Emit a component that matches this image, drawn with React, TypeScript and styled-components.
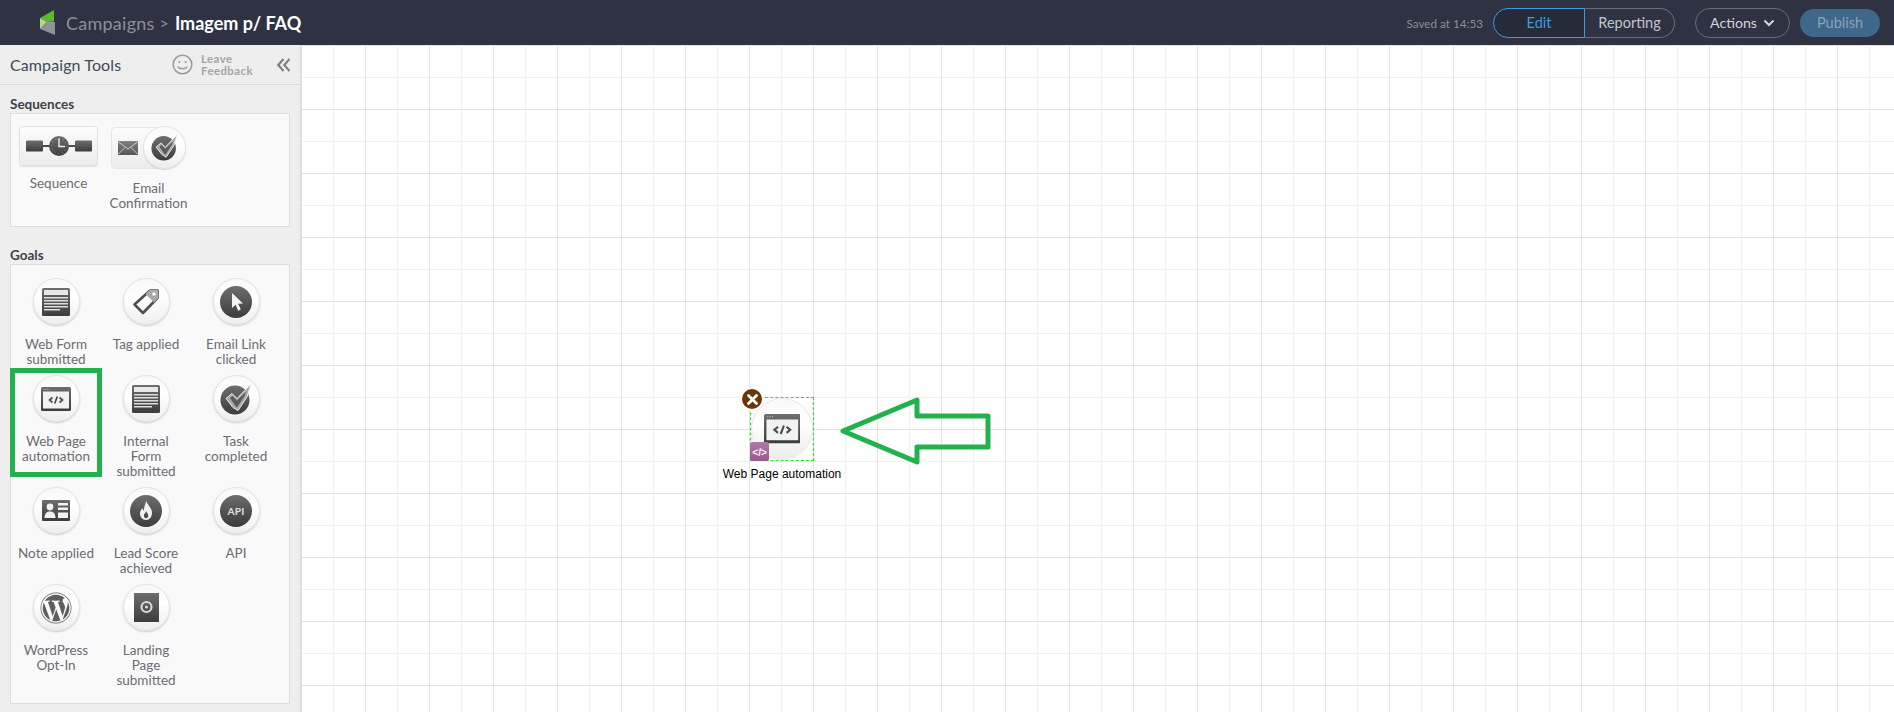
import React from "react";
import styled, { createGlobalStyle } from "styled-components";
import { FaWordpress } from "react-icons/fa";

const UI_FONT = `Lato, "Open Sans", "Liberation Sans", sans-serif`;
const GREEN = "#22b14c";

const GlobalStyle = createGlobalStyle`
  html, body {
    margin: 0;
    padding: 0;
    overflow: hidden;
    background: #fff;
    font-family: ${UI_FONT};
  }
  * { box-sizing: border-box; }
`;

const Page = styled.div`
  display: flex;
  flex-direction: column;
  width: 1894px;
  height: 712px;
  overflow: hidden;
`;

const TopBar = styled.header`
  display: flex;
  align-items: center;
  flex: 0 0 45px;
  padding: 0 14px 0 40px;
  background: #2e3243;
`;

const Crumb = styled.span`
  margin-left: 11px;
  font-size: 18px;
  letter-spacing: 0.25px;
  color: #8d8f96;
`;

const CrumbSep = styled.span`
  margin: 0 6px 0 5px;
  font-size: 16px;
  color: #8d8f96;
`;

const Title = styled.span`
  font-size: 18px;
  font-weight: 700;
  color: #fff;
`;

const Saved = styled.span`
  margin-left: auto;
  margin-right: 10px;
  font-size: 11.7px;
  color: #8d8f96;
`;

const Segments = styled.div`
  display: flex;
  height: 30px;
  margin-right: 20px;
`;

const Segment = styled.div<{ $active?: boolean }>`
  display: flex;
  align-items: center;
  justify-content: center;
  height: 30px;
  font-size: 14.5px;
  color: ${(p) => (p.$active ? "#3f9bdc" : "#c4c5c9")};
  border: 1px solid ${(p) => (p.$active ? "#3f9bdc" : "#6b6d78")};
  width: ${(p) => (p.$active ? "92px" : "90px")};
  border-radius: ${(p) => (p.$active ? "15px 0 0 15px" : "0 15px 15px 0")};
  border-left-width: ${(p) => (p.$active ? "1px" : "0")};
  background: ${(p) => (p.$active ? "#262a39" : "transparent")};
`;

const ActionsButton = styled.div`
  display: flex;
  align-items: center;
  justify-content: center;
  gap: 6px;
  width: 95px;
  height: 30px;
  margin-right: 10px;
  font-size: 14.2px;
  color: #d4d5d8;
  border: 1px solid #6b6d78;
  border-radius: 15px;
`;

const PublishButton = styled.div`
  display: flex;
  align-items: center;
  justify-content: center;
  width: 80px;
  height: 28px;
  font-size: 14.5px;
  color: #8ba2b6;
  background: #3f678a;
  border-radius: 14px;
`;

const Body = styled.div`
  display: flex;
  flex: 1;
  min-height: 0;
`;

const Sidebar = styled.aside`
  flex: 0 0 302px;
  background: #eeeeee;
  border-right: 2px solid #dedede;
`;

const SidebarHead = styled.div`
  display: flex;
  align-items: center;
  height: 40px;
  padding: 0 10px;
  border-bottom: 1px solid #dcdcdc;
`;

const SidebarTitle = styled.span`
  font-size: 16px;
  letter-spacing: 0.1px;
  color: #3f4a58;
`;

const Feedback = styled.div`
  display: flex;
  align-items: center;
  gap: 8px;
  margin-left: auto;
  margin-right: 24px;
`;

const FeedbackText = styled.span`
  font-size: 11.4px;
  line-height: 12px;
  font-weight: 700;
  letter-spacing: 0.45px;
  color: #a4a4a4;
`;

const SectionLabel = styled.div<{ $gap: number }>`
  height: 18px;
  margin: ${(p) => p.$gap}px 10px 0;
  font-size: 13.5px;
  line-height: 18px;
  font-weight: 700;
  color: #3e424a;
`;

const Panel = styled.div`
  margin: 0 10px;
  background: #f9f9f9;
  border: 1px solid #dddddd;
`;

const SequencePanel = styled(Panel)`
  display: flex;
  height: 114px;
  padding: 12px 0 0 8px;
  gap: 13px;
`;

const GoalPanel = styled(Panel)`
  display: grid;
  grid-template-columns: repeat(3, 90px);
  align-content: start;
  height: 440px;
  padding-top: 13px;
`;

const Tool = styled.div<{ $width: number }>`
  display: flex;
  flex-direction: column;
  align-items: center;
  width: ${(p) => p.$width}px;
`;

const ToolLabel = styled.div<{ $gap: number }>`
  margin-top: ${(p) => p.$gap}px;
  font-size: 13.5px;
  line-height: 15px;
  text-align: center;
  color: #6a6d74;
`;

const SequenceTile = styled.div`
  display: flex;
  align-items: center;
  justify-content: center;
  width: 79px;
  height: 40px;
  background: linear-gradient(#fdfdfd, #ececec);
  border: 1px solid #e2e2e2;
  border-radius: 4px;
  box-shadow: 0 1px 1px rgba(0, 0, 0, 0.1);
`;

const ConfirmTile = styled.div`
  position: relative;
  display: flex;
  align-items: center;
  width: 75px;
  height: 44px;
`;

const ConfirmBack = styled.div`
  display: flex;
  align-items: center;
  width: 50px;
  height: 42px;
  padding-left: 6px;
  background: linear-gradient(#fcfcfc, #ececec);
  border: 1px solid #e6e6e6;
  border-radius: 4px;
`;

const ConfirmCircle = styled.div`
  position: absolute;
  top: 0;
  right: 0;
  display: flex;
  align-items: center;
  justify-content: center;
  width: 43px;
  height: 43px;
  border-radius: 50%;
  background: linear-gradient(#fafafa, #ffffff 45%, #ededed);
  border: 1px solid #e2e2e2;
  box-shadow: 0 1px 1px rgba(0, 0, 0, 0.14);
`;

const GoalCell = styled.div`
  display: flex;
  flex-direction: column;
  align-items: center;
  padding-bottom: 8px;
`;

const Circle = styled.div`
  display: flex;
  align-items: center;
  justify-content: center;
  flex: 0 0 47px;
  width: 47px;
  height: 47px;
  border-radius: 50%;
  background: linear-gradient(#f9f9f9, #ffffff 40%, #eeeeee);
  border: 1px solid #e3e3e3;
  box-shadow: 0 1px 2px rgba(0, 0, 0, 0.2);
`;

const WpBadge = styled.div`
  display: flex;
  color: #5e5e5e;
`;

const ApiBall = styled.div`
  display: flex;
  align-items: center;
  justify-content: center;
  width: 32px;
  height: 32px;
  border-radius: 50%;
  font-size: 10px;
  font-weight: 900;
  letter-spacing: 0.2px;
  color: #d9d9d9;
  background: linear-gradient(#6c6c6c, #3a3a3a);
`;

const Canvas = styled.main`
  position: relative;
  flex: 1;
  overflow: hidden;
  background-color: #fff;
  background-image:
    linear-gradient(to right, #e2e2e2 1px, transparent 1px),
    linear-gradient(to bottom, #e2e2e2 1px, transparent 1px),
    linear-gradient(to right, #f0f0f0 1px, transparent 1px),
    linear-gradient(to bottom, #f0f0f0 1px, transparent 1px);
  background-size: 64px 64px, 64px 64px, 32px 32px, 32px 32px;
  background-position: 63px 0, 0 0, 31px 0, 0 0;
`;

/* nodes sit at free positions on the canvas */
const Node = styled.div`
  position: absolute;
  left: 448px;
  top: 352px;
  width: 64px;
  height: 64px;
  border: 1px dashed #1ee81e;
`;

const NodeCircle = styled.div`
  display: flex;
  align-items: center;
  justify-content: center;
  width: 62px;
  height: 62px;
  border-radius: 50%;
  background: linear-gradient(#f9f9f9, #ffffff 40%, #ececec);
  border: 1px solid #e8e8e8;
`;

const RemoveBadge = styled.div`
  position: absolute;
  left: -9px;
  top: -9px;
  display: flex;
  align-items: center;
  justify-content: center;
  width: 20px;
  height: 20px;
  border-radius: 50%;
  background: #6b3505;
  box-shadow: 0 0 0 1px #fff;
`;

const TypeBadge = styled.div`
  position: absolute;
  left: -1px;
  bottom: -1px;
  display: flex;
  align-items: center;
  justify-content: center;
  width: 19px;
  height: 19px;
  border-radius: 2px;
  font-family: "Liberation Sans", sans-serif;
  font-size: 10.5px;
  font-weight: 700;
  letter-spacing: -0.2px;
  color: #f8eef6;
  background: linear-gradient(#b27aa8, #98598c);
`;

const NodeLabel = styled.div`
  position: absolute;
  left: 50%;
  top: 69px;
  transform: translateX(-50%);
  white-space: nowrap;
  font-family: "Liberation Sans", Arial, sans-serif;
  font-size: 12px;
  color: #000;
`;

const ArrowMark = styled.svg`
  position: absolute;
  left: 537px;
  top: 352px;
`;

/* hand drawn annotation over the Web Page automation tool */
const Highlight = styled.div`
  position: absolute;
  left: 10px;
  top: 368px;
  width: 92px;
  height: 109px;
  border: 5px solid ${GREEN};
`;

const Defs = styled.svg`
  position: absolute;
  width: 0;
  height: 0;
`;

const Logo = () => (
  <svg width="15" height="25" viewBox="0 0 15 25">
    <polygon points="0,8 14,0 14,11.500 7,12" fill="#5db82f" />
    <polygon points="0,8 7,12 0,19" fill="#b2d88f" />
    <polygon points="0,19 7,12 15,12 15,25" fill="#8f9296" />
  </svg>
);

const Chevron = () => (
  <svg width="12" height="8" viewBox="0 0 12 8">
    <path d="M1.500 1.500 6 6l4.500-4.500" fill="none" stroke="#d4d5d8" strokeWidth="2" />
  </svg>
);

const Smiley = () => (
  <svg width="21" height="21" viewBox="0 0 21 21" fill="none" stroke="#9c9c9c">
    <circle cx="10.500" cy="10.500" r="9.300" strokeWidth="1.600" />
    <circle cx="7.300" cy="8" r="1.100" fill="#9c9c9c" stroke="none" />
    <circle cx="13.700" cy="8" r="1.100" fill="#9c9c9c" stroke="none" />
    <path d="M5.800 12.500c1.200 3 8.200 3 9.400 0" strokeWidth="1.400" />
  </svg>
);

const DoubleChevron = () => (
  <svg width="13" height="14" viewBox="0 0 13 14" fill="none" stroke="#7d7f85" strokeWidth="2.200">
    <path d="M6.500 1 1.300 7l5.200 6M12.500 1 7.300 7l5.200 6" />
  </svg>
);

const SequenceGlyph = () => (
  <svg width="66" height="22" viewBox="0 0 66 22">
    <rect x="0" y="5.500" width="17" height="11" rx="1" fill="url(#dark)" />
    <rect x="49" y="5.500" width="17" height="11" rx="1" fill="url(#dark)" />
    <rect x="17" y="10" width="32" height="2" fill="#4c4c4c" />
    <circle cx="33" cy="11" r="10" fill="url(#dark)" />
    <circle cx="33" cy="11" r="7.500" fill="none" stroke="#a0a0a0" strokeWidth="1" strokeDasharray="1 2.900" />
    <path d="M33 3.500V11.500H39" fill="none" stroke="#efefef" strokeWidth="1.400" />
  </svg>
);

const EnvelopeGlyph = () => (
  <svg width="20" height="14" viewBox="0 0 20 14">
    <rect width="20" height="14" fill="url(#mid)" />
    <path d="M0.500 1 10 8 19.500 1M0.500 13 7 6.500M19.500 13 13 6.500" fill="none" stroke="#d6d6d6" strokeWidth="0.900" />
  </svg>
);

const CheckGlyph = ({ size = 32 }: { size?: number }) => (
  <svg width={size} height={size} viewBox="0 0 32 32">
    <circle cx="15" cy="17" r="14.500" fill="url(#dark)" />
    <polygon
      points="6,15.500 12,10.500 17,15.500 31,1 27,14 18,27.500 13,24.500"
      fill="#a9a9a9"
      stroke="#efefef"
      strokeWidth="1"
      strokeLinejoin="round"
    />
    <polygon points="10,15 12.500,13 17,17.500 26,8.500 24.500,13 17,24.500 15.500,23" fill="#5a5a5a" />
  </svg>
);

const FormGlyph = ({ internal }: { internal?: boolean }) => (
  <svg width="28" height="28" viewBox="0 0 28 28">
    <rect width="28" height="28" rx="1.500" fill="url(#dark)" />
    <rect x="2" y="2" width="24" height="5" fill="#e8e8e8" />
    {[9, 12, 15, 18].map((y) => (
      <rect key={y} x="2" y={y} width="24" height="1.500" fill="#dedede" />
    ))}
    <rect x="2" y="21" width={internal ? 18 : 16} height="1.500" fill="#dedede" />
  </svg>
);

const TagGlyph = () => (
  <svg width="30" height="30" viewBox="0 0 30 30">
    <path
      d="M19 3.500h7.500V11L12 26 3.500 17.500z"
      fill="none"
      stroke="#4f4f4f"
      strokeWidth="2.600"
      strokeLinejoin="round"
    />
    <path d="M18.500 3h8.500v8.500l-4 4-8.500-8.500z" fill="#a8a8a8" />
    <circle cx="23" cy="7" r="1.800" fill="#fff" />
  </svg>
);

const CursorGlyph = () => (
  <svg width="32" height="32" viewBox="0 0 32 32">
    <circle cx="16" cy="16" r="16" fill="url(#dark)" />
    <path d="M12 7v15l3.600-3.200 2.600 6 2.600-1.200-2.600-5.800 4.800-.3z" fill="#f4f4f4" />
  </svg>
);

const BrowserGlyph = ({ scale = 1 }: { scale?: number }) => (
  <svg width={30 * scale} height={24 * scale} viewBox="0 0 30 24">
    <rect width="30" height="24" rx="1.500" fill="url(#dark)" />
    <rect x="2" y="4.500" width="26" height="17" fill="#f2f2f2" />
    <circle cx="3" cy="2.300" r="0.600" fill="#b5b5b5" />
    <circle cx="5" cy="2.300" r="0.600" fill="#b5b5b5" />
    <circle cx="7" cy="2.300" r="0.600" fill="#b5b5b5" />
    <path
      d="M11.500 10.500 8.500 13l3 2.500M18.500 10.500l3 2.500-3 2.500M16.300 9.500l-2.600 7"
      fill="none"
      stroke="#4a4a4a"
      strokeWidth="1.700"
    />
  </svg>
);

const CardGlyph = () => (
  <svg width="28" height="21" viewBox="0 0 28 21">
    <rect width="28" height="21" rx="1" fill="url(#dark)" />
    <circle cx="8" cy="7" r="3.400" fill="#f2f2f2" />
    <path d="M2.500 18c0-5 2.500-6.500 5.500-6.500S13.500 13 13.500 18z" fill="#f2f2f2" />
    <rect x="16" y="3" width="10" height="2.500" fill="#f2f2f2" />
    <rect x="16" y="7.500" width="10" height="2.500" fill="#f2f2f2" />
    <rect x="16" y="12.500" width="10" height="5.500" fill="#f2f2f2" />
  </svg>
);

const FlameGlyph = () => (
  <svg width="32" height="32" viewBox="0 0 32 32">
    <circle cx="16" cy="16" r="16" fill="url(#dark)" />
    <path
      d="M16.500 6c.5 4 5.500 6.500 5.500 12 0 4-2.500 7-6 7s-6-3-6-6.500c0-2.500 1.200-4 2.500-5.500.2 1.500.8 2.300 1.500 2.800C14 12 15 9 16.500 6zm-.3 10c-.4 1.800-2.300 2.600-2.300 4.800 0 1.500 1 2.400 2.200 2.400s2.200-1 2.200-2.400c0-2-1.700-3-2.100-4.800z"
      fill="#f2f2f2"
      fillRule="evenodd"
    />
  </svg>
);

const LandingGlyph = () => (
  <svg width="25" height="29" viewBox="0 0 25 29">
    <rect width="25" height="29" fill="url(#dark)" />
    <circle cx="12.500" cy="14" r="5" fill="none" stroke="#d8d8d8" strokeWidth="2.200" />
    <circle cx="12.500" cy="14" r="1.600" fill="#d8d8d8" />
  </svg>
);

const RemoveGlyph = () => (
  <svg width="11" height="11" viewBox="0 0 11 11">
    <path d="M1.500 1.500l8 8M9.500 1.500l-8 8" stroke="#fff" strokeWidth="2.800" strokeLinecap="round" />
  </svg>
);

const GOALS: { label: React.ReactNode; glyph: React.ReactNode }[] = [
  { label: <>Web Form<br />submitted</>, glyph: <FormGlyph /> },
  { label: "Tag applied", glyph: <TagGlyph /> },
  { label: <>Email Link<br />clicked</>, glyph: <CursorGlyph /> },
  { label: <>Web Page<br />automation</>, glyph: <BrowserGlyph /> },
  { label: <>Internal<br />Form<br />submitted</>, glyph: <FormGlyph internal /> },
  { label: <>Task<br />completed</>, glyph: <CheckGlyph /> },
  { label: "Note applied", glyph: <CardGlyph /> },
  { label: <>Lead Score<br />achieved</>, glyph: <FlameGlyph /> },
  { label: "API", glyph: <ApiBall>API</ApiBall> },
  {
    label: <>WordPress<br />Opt-In</>,
    glyph: (
      <WpBadge>
        <FaWordpress size={32} />
      </WpBadge>
    ),
  },
  { label: <>Landing<br />Page<br />submitted</>, glyph: <LandingGlyph /> },
];

export default function App() {
  return (
    <Page>
      <GlobalStyle />
      <Defs>
        <defs>
          <linearGradient id="dark" x1="0" y1="0" x2="0" y2="1">
            <stop offset="0" stopColor="#6e6e6e" />
            <stop offset="1" stopColor="#3c3c3c" />
          </linearGradient>
          <linearGradient id="mid" x1="0" y1="0" x2="0" y2="1">
            <stop offset="0" stopColor="#808080" />
            <stop offset="1" stopColor="#565656" />
          </linearGradient>
        </defs>
      </Defs>

      <TopBar>
        <Logo />
        <Crumb>Campaigns</Crumb>
        <CrumbSep>&gt;</CrumbSep>
        <Title>Imagem p/ FAQ</Title>
        <Saved>Saved at 14:53</Saved>
        <Segments>
          <Segment $active>Edit</Segment>
          <Segment>Reporting</Segment>
        </Segments>
        <ActionsButton>
          Actions <Chevron />
        </ActionsButton>
        <PublishButton>Publish</PublishButton>
      </TopBar>

      <Body>
        <Sidebar>
          <SidebarHead>
            <SidebarTitle>Campaign Tools</SidebarTitle>
            <Feedback>
              <Smiley />
              <FeedbackText>
                Leave
                <br />
                Feedback
              </FeedbackText>
            </Feedback>
            <DoubleChevron />
          </SidebarHead>

          <SectionLabel $gap={10}>Sequences</SectionLabel>
          <SequencePanel>
            <Tool $width={79}>
              <SequenceTile>
                <SequenceGlyph />
              </SequenceTile>
              <ToolLabel $gap={10}>Sequence</ToolLabel>
            </Tool>
            <Tool $width={75}>
              <ConfirmTile>
                <ConfirmBack>
                  <EnvelopeGlyph />
                </ConfirmBack>
                <ConfirmCircle>
                  <CheckGlyph size={27} />
                </ConfirmCircle>
              </ConfirmTile>
              <ToolLabel $gap={11}>
                Email
                <br />
                Confirmation
              </ToolLabel>
            </Tool>
          </SequencePanel>

          <SectionLabel $gap={19}>Goals</SectionLabel>
          <GoalPanel>
            {GOALS.map((goal, i) => (
              <GoalCell key={i}>
                <Circle>{goal.glyph}</Circle>
                <ToolLabel $gap={12}>{goal.label}</ToolLabel>
              </GoalCell>
            ))}
          </GoalPanel>
        </Sidebar>

        <Canvas>
          <Node>
            <NodeCircle>
              <BrowserGlyph scale={1.22} />
            </NodeCircle>
            <RemoveBadge>
              <RemoveGlyph />
            </RemoveBadge>
            <TypeBadge>&lt;/&gt;</TypeBadge>
            <NodeLabel>Web Page automation</NodeLabel>
          </Node>
          <ArrowMark width="156" height="72" viewBox="0 0 156 72" fill="none">
            <polygon
              points="4,34 78,3 78,19 149,19 149,50 78,50 78,65"
              stroke={GREEN}
              strokeWidth="5"
              strokeLinejoin="round"
            />
          </ArrowMark>
        </Canvas>
      </Body>

      <Highlight />
    </Page>
  );
}
